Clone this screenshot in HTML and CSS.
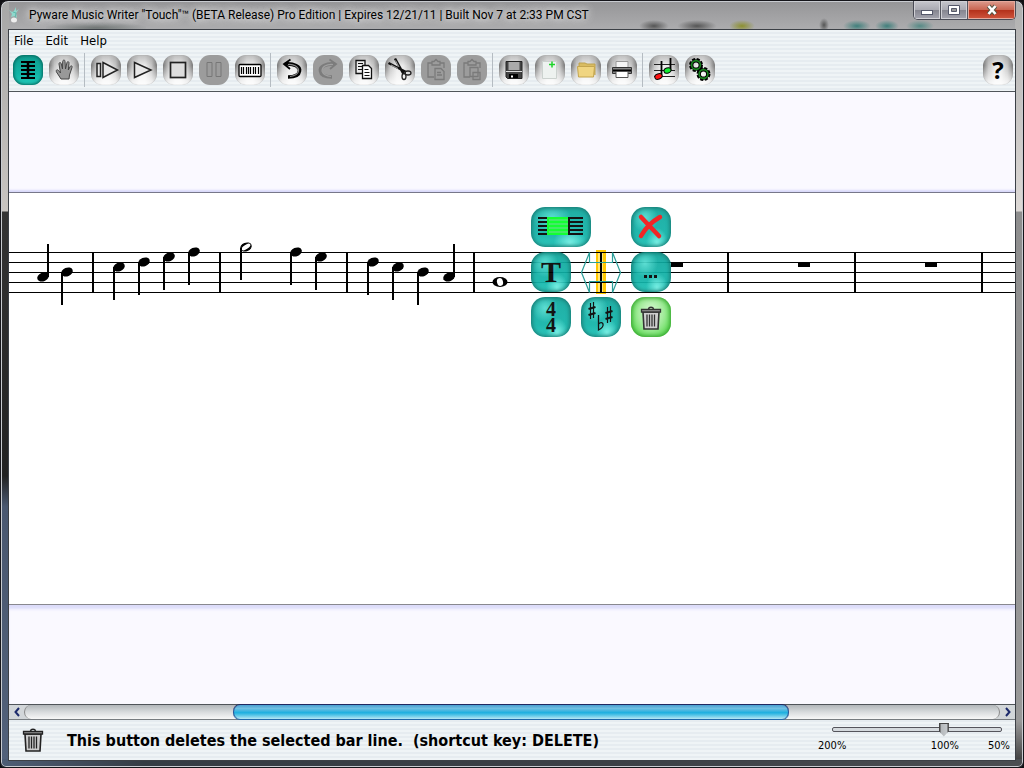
FILE: index.html
```html
<!DOCTYPE html>
<html lang="en">

<head>
    <meta charset="UTF-8">
    <meta name="viewport" content="width=device-width, initial-scale=1.0">
    <title>Pyware Music Writer</title>
    <link rel="stylesheet" href="styles.css">
</head>

<body>
    <div class="window">
        <header class="titlebar">
            <svg class="app-icon" width="14" height="16" viewBox="0 0 14 16">
                <path d="M4 5L1 3L4 7L3 10L7 9L9 11L8 6L11 2L8 4L8 0L6 4Z" fill="#8fd8cc"/>
                <path d="M5 5L8 6L7 11" stroke="#5fb9ad" fill="none"/>
                <ellipse cx="6" cy="13" rx="3" ry="2.500" fill="#eee"/>
            </svg>
            <h1 class="title">Pyware Music Writer "Touch"™ (BETA Release) Pro Edition | Expires 12/21/11 | Built Nov 7 at 2:33 PM CST</h1>
            <div class="window-buttons">
                <button class="win-btn" aria-label="Minimize"><svg width="14" height="12"><rect x="1.5" y="6.5" width="11" height="4" fill="#fff" stroke="#55586a"/></svg></button>
                <button class="win-btn" aria-label="Maximize"><svg width="14" height="12"><path d="M1.500 1.500h11v9h-11z" fill="#fff" stroke="#55586a"/><path d="M4.500 4.500h5v3h-5z" fill="#999" stroke="#55586a"/></svg></button>
                <button class="win-btn win-close" aria-label="Close"><svg width="14" height="12"><path d="M3.500 2l7 8M10.500 2l-7 8" stroke="#554" stroke-width="4.500"/><path d="M3.500 2l7 8M10.500 2l-7 8" stroke="#fff" stroke-width="2.600"/></svg></button>
            </div>
        </header>

        <main class="client">
            <nav class="menu">
                <button>File</button>
                <button>Edit</button>
                <button>Help</button>
            </nav>

            <div class="toolbar">
                <div class="group">
                    <button class="tool active" aria-label="Edit score"><svg viewBox="0 0 30 30"><path d="M8 7h14M8 11h14M8 15h14M8 19h14M8 23h14" stroke="#000" stroke-width="1.800"/><path d="M15 6v18" stroke="#000" stroke-width="2.500"/></svg></button>
                    <button class="tool" aria-label="Pan"><svg viewBox="0 0 30 30"><path d="M12 24L7.500 17C6.500 15 8.500 14 9.500 15.500L11.500 18L10 9C10 7 12 7 12.300 9L13.500 14L13.700 6.500C14 4.500 16 4.500 16 6.500L16.500 14L18 7.500C18.500 6 20.300 6.500 20 8.500L19.300 15L21.200 11.500C22 10 23.500 11 23 12.500L20.500 20L20 24Z" fill="#999" stroke="#444"/></svg></button>
                </div>
                <div class="group">
                    <button class="tool" aria-label="Play from start"><svg viewBox="0 0 30 30"><path d="M6 8.500h3.500v13H6zM12 7.500L26.500 15L12 22.500z" fill="#e8e8e8" stroke="#222" stroke-width="1.500"/></svg></button>
                    <button class="tool" aria-label="Play"><svg viewBox="0 0 30 30"><path d="M7.500 7.500L24 15L7.500 22.500z" fill="#e8e8e8" stroke="#222" stroke-width="1.500"/></svg></button>
                    <button class="tool" aria-label="Stop"><svg viewBox="0 0 30 30"><rect x="7.500" y="7.500" width="15" height="15" fill="#ddd" stroke="#222" stroke-width="1.700"/></svg></button>
                    <button class="tool" disabled aria-label="Pause"><svg viewBox="0 0 30 30"><path d="M8 7.500h5v14H8zM17 7.500h5v14h-5z" fill="none" stroke="#777"/></svg></button>
                    <button class="tool" aria-label="Keyboard"><svg viewBox="0 0 30 30"><rect x="4" y="9.500" width="22" height="12" rx="1" fill="#fff" stroke="#000" stroke-width="1.300"/><path d="M6.500 12v7M8.500 12v7M11.500 12v7M13.500 12v7M15.500 12v7M18.500 12v7M20.500 12v7M23.500 12v7" stroke="#000" stroke-width="1.200"/></svg></button>
                </div>
                <div class="group">
                    <button class="tool" aria-label="Undo"><svg viewBox="0 0 30 30"><path d="M8 9C17 8 23.500 12 22.500 16C22 20 17 22 11 22" fill="none" stroke="#000" stroke-width="3.600"/><path d="M11 9.500C17 9 22 12 21.500 16C21 19 17 21 13 21.500" fill="none" stroke="#888" stroke-width="1.200"/><path d="M13.500 4.500L7 9L13 14" fill="none" stroke="#000" stroke-width="1.800"/></svg></button>
                    <button class="tool" disabled aria-label="Redo"><svg viewBox="0 0 30 30"><path d="M22 9C13 8 6.500 12 7.500 16C8 20 13 22 19 22" fill="none" stroke="#7c7c7c" stroke-width="3.600"/><path d="M20 9.500C13 9 9 12 9 16C10 19 13 21 18 21.500" fill="none" stroke="#a0a0a0" stroke-width="1.200"/><path d="M16.500 4.500L23 9L17 14" fill="none" stroke="#7c7c7c" stroke-width="1.800"/></svg></button>
                    <button class="tool" aria-label="Copy"><svg viewBox="0 0 30 30"><path d="M7 5.500h9v13H7z" fill="#eee" stroke="#111" stroke-width="1.300"/><path d="M9 8.500h5M9 11.500h5M9 14.500h5" stroke="#111"/><path d="M13.500 10.500h6l3 3v10h-9z" fill="#fff" stroke="#111" stroke-width="1.300"/><path d="M15.500 14.500h4M15.500 17.500h5M15.500 20.500h5" stroke="#111"/></svg></button>
                    <button class="tool" aria-label="Cut"><svg viewBox="0 0 30 30"><path d="M10 3.500L18.500 19M3.500 8L21 17" stroke="#111" stroke-width="2.500"/><path d="M10.500 5.500L14 12M6 10L13 13.500" stroke="#ccc" stroke-width=".8"/><ellipse cx="19" cy="21.500" rx="2" ry="3" fill="none" stroke="#222" stroke-width="1.300"/><ellipse cx="23" cy="18" rx="3" ry="2" fill="none" stroke="#222" stroke-width="1.300"/></svg></button>
                    <button class="tool" disabled aria-label="Paste"><svg viewBox="0 0 30 30"><path d="M11 8H7v14h6M19 8h4v5M11 6.500h2l2-2 2 2h2V10h-8zM14 13.500h6l3 3v8h-9zM16 17.500h4M16 20h5" fill="none" stroke="#7a7a7a" stroke-width="1.300"/></svg></button>
                    <button class="tool" disabled aria-label="Paste special"><svg viewBox="0 0 30 30"><path d="M11 8H7v14h6M19 8h4v5M11 6.500h2l2-2 2 2h2V10h-8zM13 12.500h8v9h-8zM16 17.500h7v7h-7z" fill="none" stroke="#7a7a7a" stroke-width="1.300"/></svg></button>
                </div>
                <div class="group">
                    <button class="tool" aria-label="Save"><svg viewBox="0 0 30 30"><path d="M7 6.500h16v17H8.500L7 22z" fill="#444" stroke="#222"/><path d="M9.500 7h11v8h-11z" fill="#aaa"/><path d="M7 16.500h16" stroke="#ddd"/><path d="M10 19h9v4h-9z" fill="#000"/><path d="M12 20.500h2v2h-2z" fill="#fff"/></svg></button>
                    <button class="tool" aria-label="New"><svg viewBox="0 0 30 30"><path d="M7.500 6.500h14v17h-14z" fill="#eef2f0" stroke="#ccd2cf"/><path d="M17 6.500v6M14 9.500h6" stroke="#1fd42a" stroke-width="1.500"/></svg></button>
                    <button class="tool" aria-label="Open"><svg viewBox="0 0 30 30"><path d="M8 11V8h6l2 1h8v11" fill="#d9bc62" stroke="#bda14e"/><path d="M6.500 11.500h17l-1 10.500h-15z" fill="#f0d581" stroke="#c4a54f"/></svg></button>
                    <button class="tool" aria-label="Print"><svg viewBox="0 0 30 30"><path d="M9 13V6.500h12V13" fill="#f5f5f5" stroke="#999"/><path d="M5.500 12.500h19v6h-19z" fill="#888" stroke="#333"/><path d="M6 15.500h18" stroke="#000" stroke-width="2"/><path d="M9 16.500h12v6H9z" fill="#fff" stroke="#555"/></svg></button>
                </div>
                <div class="group">
                    <button class="tool" aria-label="Score setup"><svg viewBox="0 0 30 30"><path d="M5 9.500h21M5 15.500h21M5 21.500h21" stroke="#222" stroke-width="1.200"/><path d="M12.500 6v15M21.500 3v12" stroke="#000" stroke-width="1.800"/><ellipse cx="9.500" cy="21.500" rx="3.800" ry="2.600" fill="#f11" stroke="#000" transform="rotate(-20 9.500 21.500)"/><ellipse cx="18.500" cy="15.500" rx="3.600" ry="2.600" fill="#1e3" stroke="#000" transform="rotate(-20 18.500 15.500)"/></svg></button>
                    <button class="tool" aria-label="Preferences"><svg viewBox="0 0 30 30"><g fill="none"><g stroke="#000"><circle cx="11" cy="10" r="5.300" stroke-width="3.400" stroke-dasharray="2.800 1.360"/><circle cx="11" cy="10" r="4.200" stroke-width="3.200"/><circle cx="18.500" cy="19" r="5.300" stroke-width="3.400" stroke-dasharray="2.800 1.360"/><circle cx="18.500" cy="19" r="4.200" stroke-width="3.200"/></g><g stroke="#19851f"><circle cx="11" cy="10" r="4.400" stroke-width="1.600"/><circle cx="18.500" cy="19" r="4.400" stroke-width="1.600"/></g></g></svg></button>
                </div>
                <button class="tool help" aria-label="Help">?</button>
            </div>

            <section class="workspace">
                <div class="page-margin top"></div>
                <div class="page">
                    <svg class="score">
                        <defs>
                            <ellipse id="head" rx="6" ry="4.300" transform="rotate(-22)"/>
                            <g id="down"><use href="#head"/><path d="M-5 0v33" stroke="#000" stroke-width="2"/></g>
                            <g id="up"><use href="#head"/><path d="M5 0v-33" stroke="#000" stroke-width="2"/></g>
                            <rect id="rest" width="12" height="4"/>
                        </defs>
                        <!-- selected bar line -->
                        <rect x="587" y="57" width="10" height="44" fill="#ffc800"/>
                        <rect x="589" y="59" width="5" height="40" fill="#ffe680"/>
                        <g stroke="#000">
                            <path d="M0 59.500H4000M0 69.500H4000M0 79.500H4000M0 89.500H4000M0 99.500H4000"/>
                            <path d="M84 59v41M211 59v41M338 59v41M465 59v41M592 59v41M719 59v41M846 59v41M973 59v41" stroke-width="2"/>
                        </g>
                        <path d="M580.500 59.500l-8 20l8 20v-11h23v11l8-20l-8-20v10h-23z" fill="none" stroke="#2a9d98" stroke-width="1.200"/>
                        <use href="#up" x="34" y="84"/><use href="#down" x="58" y="79"/>
                        <use href="#down" x="110" y="74"/><use href="#down" x="135" y="69"/><use href="#down" x="160" y="64"/><use href="#down" x="185" y="59"/>
                        <ellipse cx="237" cy="54" rx="5.300" ry="3.700" fill="#000" stroke="#000" stroke-width="1.300" transform="rotate(-22 237 54)"/>
                        <ellipse cx="237" cy="54" rx="5" ry="2.200" fill="#fff" transform="rotate(-32 237 54)"/>
                        <path d="M232 55v32" stroke="#000" stroke-width="2"/>
                        <use href="#down" x="287" y="59"/><use href="#down" x="312" y="64"/>
                        <use href="#down" x="364" y="69"/><use href="#down" x="389" y="74"/><use href="#down" x="414" y="79"/><use href="#up" x="440" y="84"/>
                        <ellipse cx="491" cy="89" rx="7.500" ry="5"/><ellipse cx="491" cy="89" rx="3" ry="4" fill="#fff" transform="rotate(-15 491 89)"/>
                        <use href="#rest" x="662" y="70"/><use href="#rest" x="789" y="70"/><use href="#rest" x="916" y="70"/>
                    </svg>

                    <!-- floating bar line menu -->
                    <div class="popup">
                        <button class="gem wide" aria-label="Select measures"><svg viewBox="0 0 60 40"><path d="M7 11h9M7 15h9M7 19h9M7 23h9M7 27h9M37 11h15M37 15h15M37 19h15M37 23h15M37 27h15" stroke="#000" stroke-width="1.800"/><path d="M18 11h19v16H18z" fill="#35e95b"/><path d="M17 11h20M17 15h20M17 19h20M17 23h20M17 27h20M17 10v18" stroke="#00ff21" stroke-width="2"/><path d="M38 10v18" stroke="#000" stroke-width="2"/></svg></button>
                        <button class="gem" aria-label="Cancel"><svg viewBox="0 0 40 40"><path d="M10 10L28 29" stroke="#f01414" stroke-width="4.500" stroke-linecap="round"/><path d="M29 10C22 14 14 22 10 29" fill="none" stroke="#f01414" stroke-width="4.500" stroke-linecap="round"/></svg></button>
                        <button class="gem letter" aria-label="Text">T</button>
                        <button class="gem third" aria-label="More"><svg viewBox="0 0 40 40"><path d="M13 23h3v3h-3zM18 23h3v3h-3zM23 23h3v3h-3z"/></svg></button>
                        <button class="gem meter" aria-label="Time signature">4<br>4</button>
                        <button class="gem" aria-label="Key signature"><svg viewBox="0 0 40 40"><g fill="none" stroke="#000"><path d="M9.500 6v16M12.500 5v16" stroke-width="1.200"/><path d="M7.500 12l7-2M7.500 18l7-2" stroke-width="2.200"/><path d="M26.500 10v16M29.500 9v16" stroke-width="1.200"/><path d="M24.500 16l7-2M24.500 22l7-2" stroke-width="2.200"/><path d="M17.500 18v15c4-2 5-4 4.500-6s-3-1.500-4.500 0" stroke-width="1.300"/></g></svg></button>
                        <button class="gem green" aria-label="Delete bar line"><svg viewBox="0 0 40 40"><use href="#trash" x="9" y="9"/></svg></button>
                    </div>
                </div>
                <div class="page-margin bottom"></div>
            </section>

            <div class="scrollbar">
                <button aria-label="Scroll left"><svg width="6" height="10"><path d="M5 1L1.500 5L5 9" fill="none" stroke="#1c2a6b" stroke-width="2"/></svg></button>
                <div class="track"><div class="thumb"></div></div>
                <button aria-label="Scroll right"><svg width="6" height="10"><path d="M1 1L4.500 5L1 9" fill="none" stroke="#1c2a6b" stroke-width="2"/></svg></button>
            </div>

            <footer class="status">
                <svg class="status-icon" width="22" height="24" viewBox="0 0 22 24">
                    <g id="trash">
                        <path d="M3 6h16l-1 17H4z" fill="#ccc" stroke="#222" stroke-width="1.600"/>
                        <path d="M7 8.500v12M9.500 8.500v12M12 8.500v12M14.500 8.500v12" stroke="#222" stroke-width="1.300"/>
                        <path d="M1.500 3.500h19v2.500h-19z" fill="#999" stroke="#222" stroke-width="1.300"/>
                        <path d="M8.500 3C9 .5 13 .5 13.500 3" fill="none" stroke="#222" stroke-width="1.500"/>
                    </g>
                </svg>
                <p class="message">This button deletes the selected bar line.&nbsp; (shortcut key: DELETE)</p>
                <div class="zoom">
                    <input type="range" class="zoom-slider" min="0" max="100" value="67" aria-label="Zoom">
                    <div class="zoom-labels"><span>200%</span><span>100%</span><span>50%</span></div>
                </div>
            </footer>
        </main>
    </div>
</body>

</html>
```
FILE: styles.css
```css
* {
    box-sizing: border-box;
}

body {
    margin: 0;
    background: #101014;
    color: #000;
    font-family: "DejaVu Sans Condensed", "DejaVu Sans", sans-serif;
}

button {
    margin: 0;
    padding: 0;
    border: none;
    background: none;
    color: #000;
    font-family: inherit;
}

.window {
    display: flex;
    flex-direction: column;
    height: 100vh;
    padding: 0 7px 6px;
    border: 1px solid #15151a;
    border-radius: 8px 8px 6px 6px;
    background: linear-gradient(90deg, #4e5e76 0, #353c44 14%, #3c4046 60%, #4b4e52 100%) bottom / 100% 8px no-repeat,
        linear-gradient(#a7a7a7 0, #c8c4c0 210px, #343434 211px, #222 62%, #4a5870 66%, #52617a 100%) left / 8px 100% no-repeat,
        linear-gradient(#b0b0b0 0, #ddd9d6 210px, #8e8e8e 211px, #999 94%, #333 100%) right / 8px 100% no-repeat,
        radial-gradient(ellipse, #8c902f, transparent 70%) 728px 19px / 26px 12px no-repeat,
        radial-gradient(ellipse, #3f7f7b, transparent 70%) 842px 19px / 28px 12px no-repeat,
        radial-gradient(ellipse, #3f7f7b, transparent 70%) 874px 19px / 24px 12px no-repeat,
        radial-gradient(ellipse, #568a86, transparent 70%) 905px 19px / 28px 12px no-repeat,
        radial-gradient(ellipse, #555, transparent 70%) 638px 19px / 30px 12px no-repeat,
        radial-gradient(ellipse, #555, transparent 70%) 676px 19px / 40px 12px no-repeat,
        radial-gradient(ellipse, #555, transparent 70%) 818px 17px / 10px 14px no-repeat,
        radial-gradient(ellipse, #707675, transparent 75%) 45px 21px / 100px 12px no-repeat,
        linear-gradient(#959597, #adadaf 29px);
    box-shadow: inset 0 0 0 1px #c8cbd0;
}

/* title bar */
.titlebar {
    display: flex;
    align-items: flex-start;
    height: 28px;
    flex: none;
}

.app-icon {
    margin: 6px 7px 0 0;
}

.title {
    flex: 1;
    margin: 5px 0 0;
    font: 12px/18px Roboto, sans-serif;
    white-space: nowrap;
    text-shadow: 0 0 6px #ddd, 0 0 8px #ddd, 0 0 10px #ddd;
}

.window-buttons {
    display: flex;
    border: 1px solid #4a4b55;
    border-top: none;
    border-radius: 0 0 5px 5px;
    overflow: hidden;
}

.win-btn {
    display: flex;
    align-items: center;
    justify-content: center;
    width: 27px;
    height: 18px;
    border-right: 1px solid #55565f;
    background: linear-gradient(#c6c6cc 0, #a9a9b1 50%, #85858f 51%, #a5a5af 100%);
    box-shadow: inset 0 0 0 1px #d0d0d5;
}

.win-close {
    width: 47px;
    border: none;
    background: linear-gradient(#dc9c8e 0, #ca6652 48%, #b3301a 50%, #d0563e 100%);
    box-shadow: inset 0 0 0 1px #e6a99c;
}

/* client area */
.client {
    flex: 1;
    display: flex;
    flex-direction: column;
    min-height: 0;
    border: 1px solid #3c4046;
    background: repeating-linear-gradient(#eff4f6 0, #eff4f6 2px, #e6ecf0 2px, #e6ecf0 4px);
}

.menu {
    display: flex;
    gap: 12px;
    padding: 2px 5px 0;
}

.menu button {
    font: 13px/18px "DejaVu Sans Condensed", sans-serif;
}

.toolbar {
    display: flex;
    align-items: center;
    padding: 3px 2px 4px 4px;
    border-bottom: 1px solid #50555a;
}

.group {
    display: flex;
    gap: 6px;
    padding: 2px 5px 2px 0;
    margin-right: 6px;
    border-right: 1px solid #b5bcc2;
}

.group:nth-last-child(2) {
    border-right: none;
}

.tool {
    display: flex;
    align-items: center;
    justify-content: center;
    width: 30px;
    height: 30px;
    border-radius: 11px;
    background: linear-gradient(rgba(140, 140, 140, .5), rgba(255, 255, 255, 0) 35%, rgba(255, 255, 255, .9)),
        linear-gradient(90deg, #777 0, #c4c4c4 18%, #ececec 40%, #ececec 60%, #c4c4c4 82%, #777 100%);
    box-shadow: inset 0 0 1px #888;
}

.tool svg,
.gem svg {
    display: block;
    width: 100%;
    height: 100%;
}

.tool.active {
    background: linear-gradient(#0f9c8e, #12b3a5 60%, #22cbbb);
    box-shadow: inset 0 0 3px 1px #04695f;
}

.tool:disabled {
    background: #9c9c9c;
    box-shadow: none;
}

.tool.help {
    margin-left: auto;
    font: bold 24px/30px "Open Sans", sans-serif;
}

/* score */
.workspace {
    flex: 1;
    display: flex;
    flex-direction: column;
    min-height: 0;
}

.page-margin {
    background: #faf9ff;
}

.page-margin.top {
    flex: 100 1 0;
    border-bottom: 1px solid #77778a;
    box-shadow: inset 0 -3px 2px -1px #d8d8fa;
}

.page-margin.bottom {
    flex: 99 1 0;
    border-top: 1px solid #88888f;
    box-shadow: inset 0 5px 3px -1px #dcdcfa;
}

.page {
    position: relative;
    flex: 411 1 0;
    overflow: hidden;
    background: #fff;
}

.score {
    display: block;
    width: 100%;
    height: 100%;
}

.popup {
    position: absolute;
    top: 14px;
    left: 522px;
    display: grid;
    grid-template-columns: 40px 40px 40px;
    grid-auto-rows: 40px;
    gap: 5px 10px;
}

.gem {
    width: 40px;
    height: 40px;
    border-radius: 14px;
    background: radial-gradient(ellipse at 35% 28%, #50dcd0 0, rgba(20, 190, 180, 0) 35%),
        radial-gradient(ellipse at 65% 90%, #6ff0e4 0, rgba(20, 190, 180, 0) 30%),
        linear-gradient(#0fa79d, #10b3a8 70%, #1cc4b8);
    box-shadow: inset 0 0 4px 1px #056860;
    opacity: .92;
}

.gem.wide {
    grid-column: 1 / 3;
    width: 60px;
}

.gem.third {
    grid-column: 3;
}

.gem.green {
    background: radial-gradient(ellipse at 50% 40%, #dcfad8 0, #9aea92 45%, #35d22a 95%);
    box-shadow: inset 0 0 4px 1px #23971b;
}

.letter {
    font: bold 30px/38px "Liberation Serif", serif;
}

.meter {
    font: bold 20px/16px "Liberation Serif", serif;
}

/* scrollbar */
.scrollbar {
    display: flex;
    height: 16px;
    border-top: 1px solid #50555a;
    border-bottom: 1px solid #777c80;
    background: #d2d6d9;
}

.scrollbar button {
    display: flex;
    align-items: center;
    justify-content: center;
    width: 15px;
}

.track {
    flex: 1;
    border: 1px solid #888;
    border-width: 0 1px;
    border-radius: 8px;
    background: linear-gradient(#b2b7ba, #d8dbdd 50%, #f8f8f8);
}

.thumb {
    width: 57%;
    height: 14px;
    margin-left: 21.400%;
    border: 1px solid #1d4f98;
    border-width: 0 1px;
    border-radius: 8px;
    background: linear-gradient(#4a9fd0 0, #70bfe2 25%, #1db0e0 55%, #5fc8e8 75%, #b8e8f5 100%);
    box-shadow: 0 -1px #202860, 0 1px #2068a8;
}

/* status bar */
.status {
    display: flex;
    height: 40px;
    align-items: flex-start;
    padding: 0 5px 0 13px;
}

.status-icon {
    margin-top: 8px;
}

.message {
    flex: 1;
    margin: 10px 0 0 23px;
    font-size: 16px;
    line-height: 22px;
    font-weight: bold;
    white-space: nowrap;
}

.zoom {
    width: 192px;
}

.zoom-slider {
    display: block;
    width: 170px;
    height: 18px;
    margin: 0 0 0 14px;
    appearance: none;
    background: none;
}

.zoom-slider::-webkit-slider-runnable-track {
    height: 5px;
    border: 1px solid #55555c;
    border-radius: 2px;
    background: #d5dade;
}

.zoom-slider::-webkit-slider-thumb {
    appearance: none;
    width: 10px;
    height: 14px;
    margin-top: -5px;
    background: linear-gradient(#444 1px, transparent 1px),
        linear-gradient(90deg, #444 1px, #b4b8bb 2px, #c4c8cb 8px, #444 9px);
    clip-path: polygon(0 0, 100% 0, 100% 60%, 50% 100%, 0 60%);
}

.zoom-labels {
    display: grid;
    grid-template-columns: 1fr auto auto;
    gap: 29px;
    font-size: 11px;
    line-height: 16px;
}
```
